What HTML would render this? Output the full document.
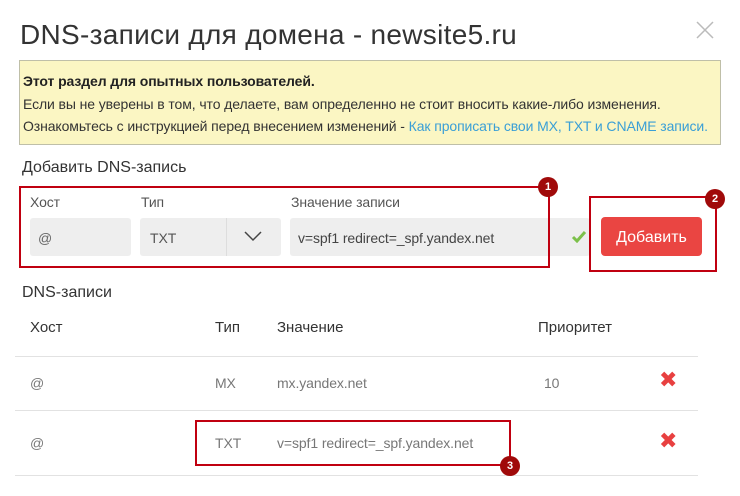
<!DOCTYPE html><html><head><meta charset="utf-8"><style>
body{margin:0;width:740px;height:496px;background:#fff;font-family:"Liberation Sans",sans-serif;color:#333;position:relative;overflow:hidden}
.a{position:absolute;white-space:nowrap}
.t{font-size:14px;letter-spacing:-0.1px}
.in{position:absolute;background:#eeeeee;border-radius:3px;height:38px;top:218px}
.rb{position:absolute;border:2px solid #c00010}
.bd{position:absolute;width:20px;height:20px;border-radius:50%;background:#a00a0a;color:#fff;font-size:11px;font-weight:bold;text-align:center;line-height:20px}
.ln{position:absolute;left:15px;width:683px;height:1px;background:#e2e2e2}
.x{position:absolute;color:#e84040;font-size:22px;font-weight:bold;font-family:"DejaVu Sans",sans-serif}
</style></head><body>
<div class="a" style="left:20px;top:19px;font-size:28px;color:#333;letter-spacing:0.3px">DNS-записи для домена - newsite5.ru</div>
<svg class="a" style="left:696px;top:21px" width="18" height="18"><path d="M1 1L17 17M17 1L1 17" stroke="#bbb" stroke-width="1.5"/></svg>
<div class="a" style="left:19px;top:60px;width:700px;height:83px;background:#fbf6c3;border:1px solid #bfbfa8"></div>
<div class="a t" style="left:23px;top:73px;font-weight:bold;color:#222">Этот раздел для опытных пользователей.</div>
<div class="a t" style="left:23px;top:96px;color:#333">Если вы не уверены в том, что делаете, вам определенно не стоит вносить какие-либо изменения.</div>
<div class="a t" style="left:23px;top:118px;color:#333">Ознакомьтесь с инструкцией перед внесением изменений - <span style="color:#3a9fd6">Как прописать свои MX, TXT и CNAME записи.</span></div>
<div class="a" style="left:22px;top:159px;font-size:16px;color:#333">Добавить DNS-запись</div>
<div class="a t" style="left:30px;top:194px;color:#555">Хост</div>
<div class="a t" style="left:141px;top:194px;color:#555">Тип</div>
<div class="a t" style="left:291px;top:194px;color:#555">Значение записи</div>
<div class="in" style="left:30px;width:101px"></div>
<div class="in" style="left:140px;width:141px"></div>
<div class="a" style="left:226px;top:218px;width:1px;height:38px;background:#ddd"></div>
<div class="in" style="left:290px;width:300px"></div>
<div class="a t" style="left:38px;top:230px;color:#666">@</div>
<div class="a t" style="left:150px;top:230px;color:#555">TXT</div>
<svg class="a" style="left:244px;top:231px" width="18" height="11"><path d="M1 1L9 9L17 1" stroke="#444" stroke-width="1.5" fill="none"/></svg>
<div class="a t" style="left:298px;top:230px;color:#444">v=spf1 redirect=_spf.yandex.net</div>
<svg class="a" style="left:571px;top:230px" width="16" height="13"><path d="M2 7L6 11L14 2" stroke="#7cc04a" stroke-width="3" fill="none"/></svg>
<div class="a" style="left:601px;top:217px;width:101px;height:39px;background:#ea4542;border-radius:4px;color:#fff;font-size:16px;text-align:center;line-height:41px">Добавить</div>
<div class="rb" style="left:19px;top:186px;width:527px;height:78px"></div>
<div class="rb" style="left:589px;top:196px;width:124px;height:72px"></div>
<div class="bd" style="left:538px;top:177px">1</div>
<div class="bd" style="left:705px;top:189px">2</div>
<div class="a" style="left:22px;top:284px;font-size:16px;color:#333">DNS-записи</div>
<div class="a" style="left:30px;top:319px;font-size:15px;color:#333">Хост</div>
<div class="a" style="left:215px;top:319px;font-size:15px;color:#333">Тип</div>
<div class="a" style="left:277px;top:319px;font-size:15px;color:#333">Значение</div>
<div class="a" style="left:538px;top:319px;font-size:15px;color:#333">Приоритет</div>
<div class="ln" style="top:356px"></div>
<div class="a t" style="left:30px;top:375px;color:#777">@</div>
<div class="a t" style="left:215px;top:375px;color:#777">MX</div>
<div class="a t" style="left:277px;top:375px;color:#777">mx.yandex.net</div>
<div class="a t" style="left:544px;top:375px;color:#777">10</div>
<div class="x" style="left:659px;top:368px">✖</div>
<div class="ln" style="top:410px"></div>
<div class="a t" style="left:30px;top:435px;color:#777">@</div>
<div class="a t" style="left:215px;top:435px;color:#777">TXT</div>
<div class="a t" style="left:277px;top:435px;color:#777">v=spf1 redirect=_spf.yandex.net</div>
<div class="x" style="left:659px;top:429px">✖</div>
<div class="ln" style="top:475px"></div>
<div class="rb" style="left:195px;top:420px;width:312px;height:42px"></div>
<div class="bd" style="left:500px;top:456px">3</div>
</body></html>
